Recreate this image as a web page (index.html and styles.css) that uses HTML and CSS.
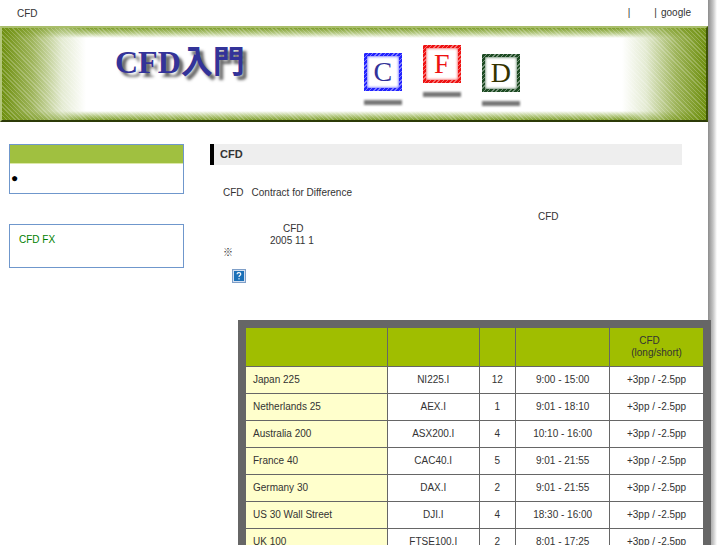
FILE: index.html
```
<!DOCTYPE html>
<html lang="ja">
<head>
    <meta charset="UTF-8">
    <meta name="viewport" content="width=device-width, initial-scale=1.0">
    <title>CFD入門</title>
    <link rel="stylesheet" href="styles.css">
</head>
<body>
<div class="page">

    <header class="topbar">
        <span class="site-name">CFD</span>
        <nav class="topnav">
            <span>|</span>
            <span>|</span>
            <a href="#">google</a>
        </nav>
    </header>

    <div class="banner">
        <h1 class="banner-title">CFD入門</h1>
        <div class="tiles">
            <div class="tile tile-c"><span>C</span></div>
            <div class="tile tile-f"><span>F</span></div>
            <div class="tile tile-d"><span>D</span></div>
        </div>
    </div>

    <div class="columns">
        <aside class="sidebar">
            <div class="menu">
                <div class="menu-title"></div>
                <div class="menu-body">●</div>
            </div>
            <div class="links">
                <a href="#">CFD FX</a>
            </div>
        </aside>

        <main class="content">
            <h2>CFD</h2>
            <div class="intro">
                <p>CFD<span class="term">Contract for Difference</span></p>
                <p class="far">CFD</p>
                <p class="near">CFD</p>
                <p class="date">2005 11 1</p>
                <p>※</p>
                <svg class="help" width="14" height="14" viewBox="0 0 14 14">
                    <rect width="14" height="14" fill="#7f9fc8"/>
                    <rect x="1" y="1" width="12" height="12" fill="#d3dff0"/>
                    <rect x="2" y="2" width="10" height="10" fill="#1b70b8"/>
                    <path d="M5.2 5.2V4.4Q5.5 3.6 7 3.6Q8.8 3.6 8.8 5Q8.8 6 7.8 6.5Q7 6.9 7 8" fill="none" stroke="#fff" stroke-width="1.1"/>
                    <rect x="6.4" y="9.2" width="1.2" height="1.2" fill="#fff"/>
                </svg>
            </div>

            <div class="table-box">
                <table>
                    <colgroup>
                        <col class="col-name">
                        <col class="col-code">
                        <col class="col-num">
                        <col class="col-time">
                        <col class="col-rate">
                    </colgroup>
                    <thead>
                        <tr>
                            <th></th>
                            <th></th>
                            <th></th>
                            <th></th>
                            <th>CFD<br><span class="sub">(long/short)</span></th>
                        </tr>
                    </thead>
                    <tbody>
                        <tr><td>Japan 225</td><td>NI225.I</td><td>12</td><td>9:00 - 15:00</td><td>+3pp / -2.5pp</td></tr>
                        <tr><td>Netherlands 25</td><td>AEX.I</td><td>1</td><td>9:01 - 18:10</td><td>+3pp / -2.5pp</td></tr>
                        <tr><td>Australia 200</td><td>ASX200.I</td><td>4</td><td>10:10 - 16:00</td><td>+3pp / -2.5pp</td></tr>
                        <tr><td>France 40</td><td>CAC40.I</td><td>5</td><td>9:01 - 21:55</td><td>+3pp / -2.5pp</td></tr>
                        <tr><td>Germany 30</td><td>DAX.I</td><td>2</td><td>9:01 - 21:55</td><td>+3pp / -2.5pp</td></tr>
                        <tr><td>US 30 Wall Street</td><td>DJI.I</td><td>4</td><td>18:30 - 16:00</td><td>+3pp / -2.5pp</td></tr>
                        <tr><td>UK 100</td><td>FTSE100.I</td><td>2</td><td>8:01 - 17:25</td><td>+3pp / -2.5pp</td></tr>
                    </tbody>
                </table>
            </div>
        </main>
    </div>

</div>
</body>
</html>
```
FILE: styles.css
```
* {
    box-sizing: border-box;
}
body {
    margin: 0;
    background: #fff;
    color: #333;
    font-family: "Liberation Sans", "Noto Sans CJK JP", sans-serif;
    font-size: 10px;
    line-height: 12px;
}
h1, h2, p {
    margin: 0;
}
a {
    color: inherit;
    text-decoration: none;
}
.page {
    min-height: 100vh;
    margin-right: 10px;
    padding-right: 9px;
    background: linear-gradient(to right, #8c8c8c, #c4c4c4 5px, #fff) right / 9px 100% no-repeat;
}

/* top line */
.topbar {
    display: flex;
    justify-content: space-between;
    height: 26px;
    padding: 8px 17px 0 17px;
}
.topnav {
    display: flex;
    margin-top: -1px;
}
.topnav span {
    margin-right: 24px;
}
.topnav span + span {
    margin-right: 4px;
}

/* banner */
.banner {
    display: flex;
    height: 96px;
    padding-left: 113px;
    border-top: 2px solid #a9be6a;
    border-left: 2px solid #b4c77c;
    border-right: 2px solid #3c5206;
    border-bottom: 2px solid #2c3a08;
    background:
        repeating-linear-gradient(45deg, rgba(255, 255, 255, 0.22) 0 1px, transparent 1px 3px),
        linear-gradient(to right, #6f9010, rgba(134, 162, 50, 0.8) 30px, rgba(200, 214, 165, 0.5) 60px, rgba(255, 255, 255, 0) 84px),
        linear-gradient(to left, #6f9010, rgba(134, 162, 50, 0.8) 30px, rgba(200, 214, 165, 0.5) 60px, rgba(255, 255, 255, 0) 84px),
        linear-gradient(to bottom, #7e9e2c, #b5c983 5px, #fff 10px calc(100% - 9px), #b5c983 calc(100% - 4px), #7e9e2c);
}
.banner-title {
    margin-top: 14px;
    color: #339;
    font: bold 32px/40px "Liberation Serif", "Noto Sans CJK JP", serif;
    text-shadow: 4px 4px 3px #666;
    white-space: nowrap;
}
.tiles {
    display: flex;
    gap: 21px;
    margin-left: 119px;
}
.tile {
    margin-top: 25px;
    font: 28px/32px "Liberation Serif", serif;
    text-align: center;
}
.tile span {
    display: block;
    width: 38px;
    height: 38px;
    border: 3px solid transparent;
    background:
        linear-gradient(#fff, #fff) padding-box,
        repeating-linear-gradient(135deg, rgba(255, 255, 255, 0.4) 0 1px, transparent 1px 3px) border-box,
        linear-gradient(var(--edge), var(--edge)) border-box;
    box-shadow: inset 0 0 3px var(--edge);
}
.tile::after {
    content: "";
    display: block;
    height: 5px;
    margin-top: 9px;
    background: #777;
    filter: blur(1px);
}
.tile-c {
    --edge: #22f;
    color: #339;
}
.tile-f {
    --edge: #e11;
    margin-top: 17px;
    color: #e11;
}
.tile-d {
    --edge: #1c4a22;
    margin-top: 26px;
    color: #330;
}

/* two columns */
.columns {
    display: flex;
    gap: 26px;
    padding: 22px 26px 0 9px;
}
.sidebar {
    flex: 0 0 175px;
}
.menu, .links {
    border: 1px solid #6f97cc;
}
.menu {
    height: 50px;
    margin-bottom: 30px;
}
.menu-title {
    height: 19px;
    background: #a0c040;
    border-bottom: 1px solid #dce8a8;
}
.menu-body {
    padding: 8px 1px;
    color: #000;
    font-size: 12px;
}
.links {
    height: 44px;
    padding: 9px;
    color: #008000;
}
.content {
    flex: 1;
    min-width: 0;
}
h2 {
    height: 21px;
    padding: 4px 6px;
    border-left: 4px solid #000;
    background: #eee;
    font-size: 11px;
    line-height: 12px;
}
.intro {
    padding: 22px 0 0 13px;
}
.term {
    margin-left: 8px;
}
.far {
    margin-top: 12px;
    padding-left: 315px;
}
.near {
    padding-left: 60px;
}
.date {
    padding-left: 47px;
}
.help {
    display: block;
    margin: 10px 0 0 9px;
}

/* quotes table */
.table-box {
    margin: 37px -29px 0 28px;
    border: 7px solid #666;
}
table {
    width: 100%;
    table-layout: fixed;
    border-collapse: collapse;
}
.col-name {
    width: 31%;
}
.col-code {
    width: 20%;
}
.col-num {
    width: 8%;
}
th, td {
    height: 27px;
    padding: 0 7px;
    border: 1px solid #666;
    text-align: center;
    font-weight: normal;
}
th {
    height: 39px;
    padding: 0 16px 0 2px;
    background: #a0be00;
}
th .sub {
    margin-right: -14px;
}
td {
    background: #fff;
}
td:first-child {
    background: #ffc;
    text-align: left;
}
```
